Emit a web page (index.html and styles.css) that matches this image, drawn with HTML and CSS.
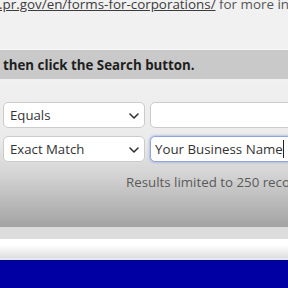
FILE: index.html
```html
<!DOCTYPE html>
<html>
<head>
<meta charset="utf-8">
<link rel="stylesheet" href="styles.css">
</head>
<body>
<div class="top">
  <p class="intro"><a class="link" href="#">.pr.gov/en/forms-for-corporations/</a> for more in</p>
</div>
<div class="band"><span>then click the Search button.</span></div>
<div class="panel">
  <div class="row">
    <div class="select">
      <span>Equals</span>
      <svg class="chev" width="10" height="6" viewBox="0 0 10 6"><path d="M1 1l4 4 4-4" fill="none" stroke="#333" stroke-width="1.6" stroke-linecap="round" stroke-linejoin="round"/></svg>
    </div>
    <div class="input"></div>
  </div>
  <div class="row">
    <div class="select">
      <span>Exact Match</span>
      <svg class="chev" width="10" height="6" viewBox="0 0 10 6"><path d="M1 1l4 4 4-4" fill="none" stroke="#333" stroke-width="1.6" stroke-linecap="round" stroke-linejoin="round"/></svg>
    </div>
    <div class="input focus"><span>Your Business Name</span><i class="caret"></i></div>
  </div>
  <p class="note">Results limited to 250 reco</p>
</div>
<div class="footer">
  <div class="f1"></div>
  <div class="f2"></div>
  <div class="f3"></div>
  <div class="f4"></div>
</div>
</body>
</html>
```
FILE: styles.css
```css
html, body {
  margin: 0;
  padding: 0;
  width: 288px;
  height: 288px;
  overflow: hidden;
  font-family: "Open Sans", "Noto Sans", sans-serif;
  background: #f1f1f1;
}
.top {
  height: 49px;
  overflow: hidden;
  background: #f1f1f1;
  border-bottom: 1px solid #f9f9f9;
}
.intro {
  margin: -6px 0 0 -1px;
  white-space: nowrap;
  font-size: 13.4px;
  line-height: 20px;
  color: #555;
}
.link {
  color: #3c3c3c;
  text-decoration: underline;
}
.band {
  height: 29px;
  background: #c9c9c9;
  display: flex;
  align-items: center;
  padding-left: 3px;
  font-size: 13.3px;
  font-weight: 700;
  color: #1e1e1e;
}
.panel {
  height: 148px;
  background: linear-gradient(#f0f0f0 0px, #ebebeb 60px, #d4d4d4 95px, #b8b8b8 125px, #a3a3a3 148px);
  padding: 23px 0 0 3px;
  box-sizing: border-box;
}
.row {
  display: flex;
  gap: 5px;
  margin-bottom: 8px;
  white-space: nowrap;
}
.select {
  position: relative;
  flex: none;
  width: 142px;
  height: 26px;
  box-sizing: border-box;
  border: 1px solid #cbcbcb;
  border-radius: 5px;
  background: #fff;
  display: flex;
  align-items: center;
  padding-left: 6px;
  font-size: 13.2px;
  color: #333;
}
.chev {
  position: absolute;
  right: 5px;
  top: 10px;
}
.input {
  flex: none;
  width: 170px;
  height: 26px;
  box-sizing: border-box;
  border: 1px solid #cbcbcb;
  border-radius: 5px;
  background: #fff;
  display: flex;
  align-items: center;
  padding-left: 4px;
  font-size: 13.3px;
  color: #333;
}
.input.focus {
  border-color: #93a6dc;
  box-shadow: 0 0 2px 1px rgba(130, 155, 225, 0.45);
}
.caret {
  display: inline-block;
  width: 1px;
  height: 18px;
  background: #222;
}
.note {
  margin: 11px 0 0 123px;
  font-size: 13.3px;
  line-height: 18px;
  color: #5a5a5a;
  white-space: nowrap;
}
.footer {
  display: flex;
  flex-direction: column;
}
.f1 {
  height: 12px;
  background: #dcdcdc;
}
.f2 {
  height: 19px;
  background: linear-gradient(#ffffff 0px, #ffffff 6px, #dedede 19px);
}
.f3 {
  height: 2px;
  background: #e6e6f4;
}
.f4 {
  height: 27px;
  background: #0000a3;
  border-top: 1px solid #000088;
}
```
